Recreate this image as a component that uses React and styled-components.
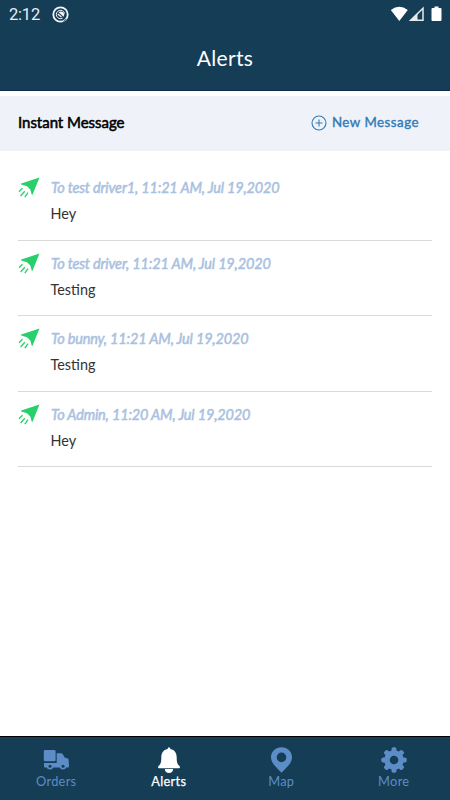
import styled, { createGlobalStyle } from "styled-components";

const GlobalStyle = createGlobalStyle`
  body {
    margin: 0;
    background: #fff;
    font-family: Lato, "Open Sans", sans-serif;
  }
`;

const Wrapper = styled.div`
  display: flex;
  flex-direction: column;
  width: 450px;
  height: 800px;
  overflow: hidden;
  background: #fff;

  svg {
    display: block;
    flex: none;
  }
`;

const Header = styled.header`
  box-sizing: border-box;
  height: 91px;
  color: #fff;
  background: #153d55;
  border-bottom: 1px solid #0b2d4b;
`;

const StatusBar = styled.div`
  display: flex;
  align-items: center;
  height: 28px;
  padding: 0 8px 0 9px;

  .time {
    flex: 1;
    display: flex;
    align-items: center;
    gap: 12px;
    font-family: Roboto, sans-serif;
    font-size: 16.5px;
    letter-spacing: -0.2px;
    color: #e9eef2;
  }
`;

const Title = styled.h1`
  margin: 0;
  font-size: 21px;
  line-height: 60px;
  font-weight: 400;
  letter-spacing: 0.3px;
  text-align: center;
`;

const SubHeader = styled.div`
  display: flex;
  align-items: center;
  justify-content: space-between;
  box-sizing: border-box;
  height: 55px;
  margin-top: 5px;
  padding: 0 31px 3px 18px;
  background: #eff3f9;

  h2 {
    margin: 0;
    font-size: 15px;
    font-weight: 400;
    letter-spacing: -0.03px;
    color: #000;
    -webkit-text-stroke: 0.55px #000;
  }
`;

const NewMessage = styled.button`
  display: flex;
  align-items: center;
  gap: 5px;
  padding: 0;
  border: 0;
  background: transparent;
  font-family: inherit;
  font-size: 13.3px;
  letter-spacing: 0.5px;
  color: #337ab7;
  -webkit-text-stroke: 0.4px #337ab7;

  svg {
    position: relative;
    top: 1px;
  }
`;

const MessageList = styled.ul`
  flex: 1;
  margin: 0;
  padding: 14px 18px 0;
  list-style: none;
`;

const MessageRow = styled.li`
  display: flex;
  gap: 11px;
  box-sizing: border-box;
  height: 75.6px;
  padding-top: 12px;
  border-bottom: 1px solid #d9d9d9;

  .info {
    margin-top: 1px;
    font-size: 14.5px;
    line-height: 20px;
    font-style: italic;
    letter-spacing: -0.17px;
    color: #a9c1e0;
    white-space: nowrap;
    -webkit-text-stroke: 0.5px #a9c1e0;
  }

  .content {
    margin-top: 6px;
    margin-left: -0.5px;
    font-size: 14.4px;
    line-height: 20px;
    color: #333;
  }
`;

const TabBar = styled.nav`
  display: grid;
  grid-template-columns: repeat(4, 1fr);
  box-sizing: border-box;
  height: 64px;
  border-top: 1px solid #000;
  background: #153d55;
`;

const Tab = styled.div`
  display: flex;
  flex-direction: column;
  align-items: center;
  padding-top: 10px;
  font-size: 12.8px;
  line-height: 16px;
  letter-spacing: 0.3px;
  color: ${(props) => (props.$active ? "#fff" : "#5d8dc6")};
  -webkit-text-stroke: ${(props) => (props.$active ? "0.25px #fff" : "0")};
`;

const CircleIcon = () => (
  <svg width="17" height="17" viewBox="0 0 17 17" fill="none" stroke="#f3f6f8">
    <circle cx="8.5" cy="8.5" r="7.2" strokeWidth="1.8" />
    <path d="M10.5 12.2A4.2 4.2 0 1 1 12.6 7.5" strokeWidth="1" />
    <path d="M6.5 6.3A3.6 3.6 0 0 1 12.3 8.5L11.6 10.8Z" fill="#f3f6f8" stroke="none" />
    <path d="M5.8 8L9.5 11" strokeWidth="1.3" />
    <path d="M11.5 15.8L14.5 12.8" stroke="#153d55" strokeWidth="1" />
  </svg>
);

const SystemIcons = () => (
  <svg width="52" height="17" viewBox="0 0 52 17" fill="#fff">
    <path d="M.8 3.900Q9.300-2.500 17.800 3.900L9.300 15Z" />
    <path d="M33 2.200V14.300H20.700Z" fill="none" stroke="#e4e9ec" strokeWidth="1.5" />
    <path d="M19.500 15L27.500 7V15Z" fill="#e4e9ec" />
    <path d="M44.500 .5h4v1.500H50.500q1 0 1 1V14q0 1-1 1h-8q-1 0-1-1V3q0-1 1-1h2Z" />
  </svg>
);

const PlusIcon = () => (
  <svg width="16" height="16" viewBox="0 0 16 16" fill="none" stroke="#337ab7" strokeWidth="1.1">
    <circle cx="8" cy="8" r="7" />
    <path d="M8 4.5v7M4.5 8h7" />
  </svg>
);

const SendIcon = () => (
  <svg width="22" height="22" viewBox="0 0 22 22" fill="#28d06b">
    <path d="M21.5.5L3.2 6.600Q2.600 7 3.300 7.400L9 9.300L12.300 12.600L13.700 17.500Q14.200 18.300 14.600 17.500Z" />
    <path
      d="M4.500 11.200L1 14.800M6.800 14.300L2.600 19M10 15.600L6.800 20.200"
      fill="none"
      stroke="#28d06b"
      strokeWidth="1.3"
    />
  </svg>
);

const TruckIcon = () => (
  <svg width="26" height="26" viewBox="0 0 26 26" fill="currentColor">
    <rect x="0.8" y="3" width="11.8" height="11.3" rx="1.4" />
    <path d="M13.7 6.3h4.3q1 0 1.6.8l2.1 3.5 3 1q1 .4 1 1.5v3.5q.3.3.3 1v1.900q0 1-1 1H2q-1 0-1-1v-3.600h12.700Z" />
    <circle cx="7" cy="19.3" r="3.2" />
    <circle cx="20" cy="19.3" r="3.2" />
    <circle cx="7" cy="19.3" r="1.500" fill="#153d55" />
    <circle cx="20" cy="19.3" r="1.500" fill="#153d55" />
  </svg>
);

const BellIcon = () => (
  <svg width="26" height="26" viewBox="0 0 26 26" fill="currentColor">
    <path d="M13 .2q1.200 0 1.400 1.800c4.500.9 6.300 4.200 6.300 8.500 0 5 .7 6.700 2.800 8.600.9 1.200.3 2.200-1 2.200h-19c-1.300 0-1.900-1-1-2.200 2.100-1.900 2.800-3.600 2.800-8.600 0-4.300 1.800-7.600 6.300-8.500Q11.800.2 13 .2Z" />
    <path d="M8.800 22h8.400c-.2 2.500-1.800 4-4.200 4s-4-1.500-4.200-4Z" />
  </svg>
);

const MapIcon = () => (
  <svg width="26" height="26" viewBox="0 0 26 26" fill="currentColor">
    <path
      fillRule="evenodd"
      d="M13.500.2C7.300.2 3 4.600 3 10.300c0 6 5.500 10 10.500 15.400 5-5.400 10.500-9.400 10.500-15.400C24 4.600 19.700.2 13.500.2Zm0 5.400a4.800 4.800 0 1 1 0 9.600 4.800 4.800 0 0 1 0-9.600Z"
    />
  </svg>
);

const GearIcon = () => (
  <svg width="26" height="26" viewBox="0 0 26 26" fill="currentColor">
    {[0, 45, 90, 135].map((deg) => (
      <rect key={deg} x="10.5" y="0.3" width="5" height="25.4" rx="1.8" transform={`rotate(${deg} 13 13)`} />
    ))}
    <circle cx="13" cy="13" r="9.8" />
    <circle cx="13" cy="13" r="4.3" fill="#153d55" />
  </svg>
);

const messages = [
  { info: "To test driver1, 11:21 AM, Jul 19,2020", content: "Hey" },
  { info: "To test driver, 11:21 AM, Jul 19,2020", content: "Testing" },
  { info: "To bunny, 11:21 AM, Jul 19,2020", content: "Testing" },
  { info: "To Admin, 11:20 AM, Jul 19,2020", content: "Hey" },
];

const tabs = [
  { name: "Orders", Icon: TruckIcon },
  { name: "Alerts", Icon: BellIcon },
  { name: "Map", Icon: MapIcon },
  { name: "More", Icon: GearIcon },
];

const App = () => {
  return (
    <Wrapper>
      <GlobalStyle />
      <Header>
        <StatusBar>
          <div className="time">
            2:12
            <CircleIcon />
          </div>
          <SystemIcons />
        </StatusBar>
        <Title>Alerts</Title>
      </Header>
      <SubHeader>
        <h2>Instant Message</h2>
        <NewMessage>
          <PlusIcon />
          New Message
        </NewMessage>
      </SubHeader>
      <MessageList>
        {messages.map((message) => (
          <MessageRow key={message.info}>
            <SendIcon />
            <div>
              <div className="info">{message.info}</div>
              <div className="content">{message.content}</div>
            </div>
          </MessageRow>
        ))}
      </MessageList>
      <TabBar>
        {tabs.map(({ name, Icon }) => (
          <Tab key={name} $active={name === "Alerts"}>
            <Icon />
            <span>{name}</span>
          </Tab>
        ))}
      </TabBar>
    </Wrapper>
  );
};

export default App;
